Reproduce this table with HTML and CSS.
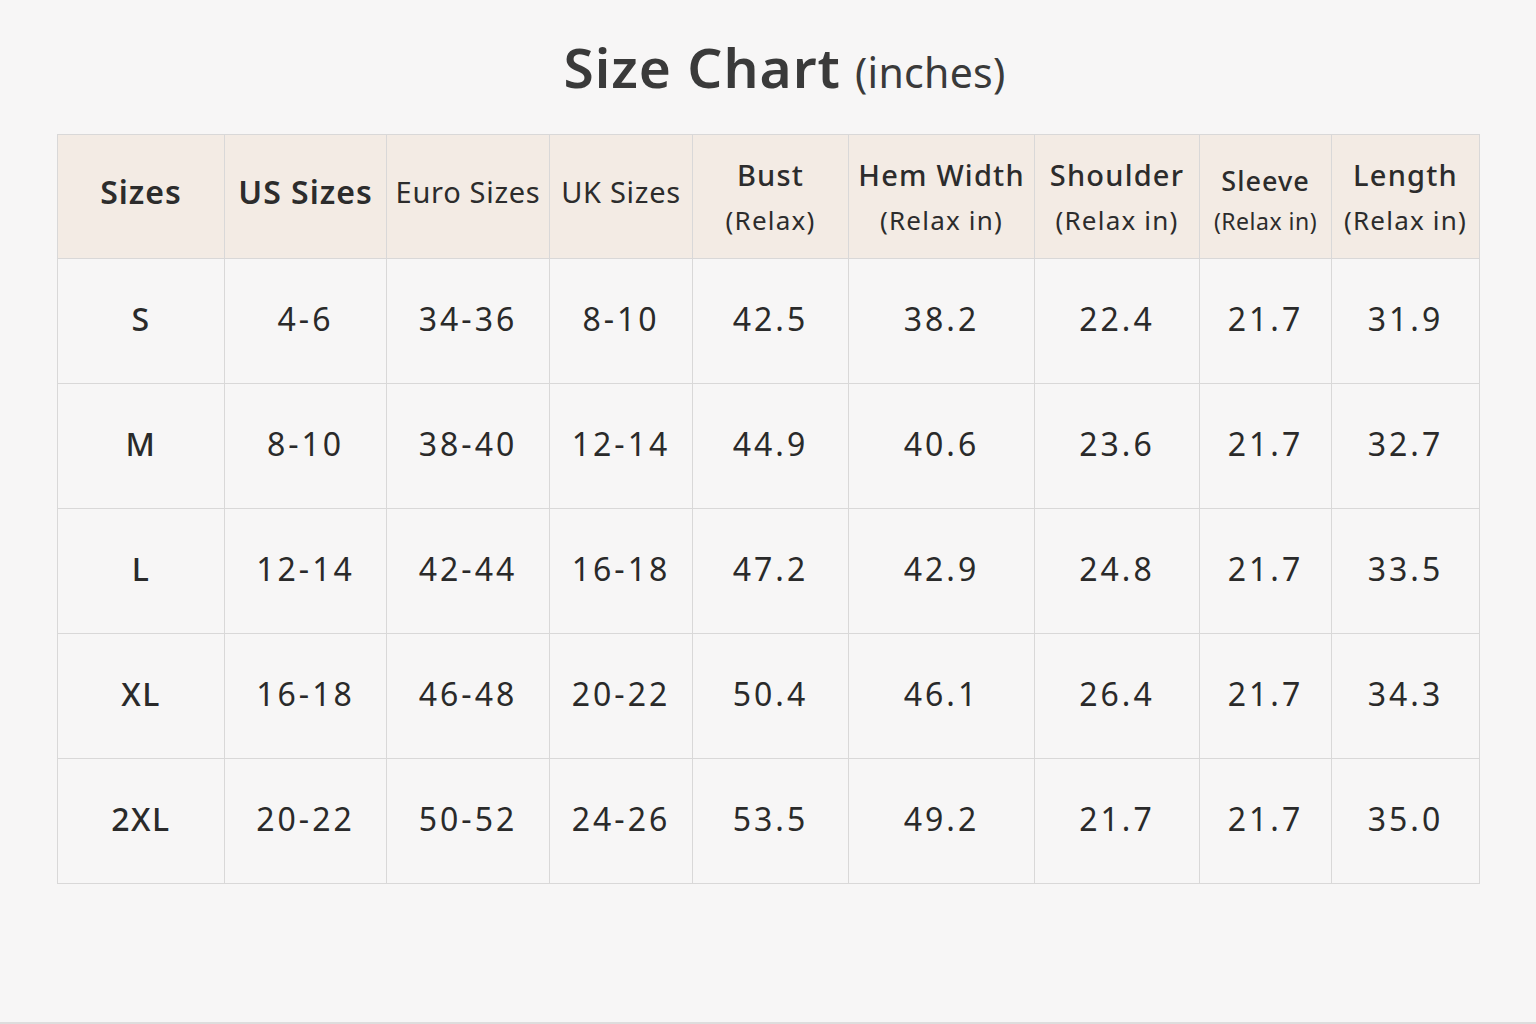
FILE: index.html
```html
<!DOCTYPE html>
<html>
<head>
<meta charset="utf-8">
<link rel="stylesheet" href="styles.css">
</head>
<body>
<div class="page">
  <h1 class="title"><span class="title-main">Size Chart</span> <span class="title-sub">(inches)</span></h1>
  <table class="chart">
    <colgroup>
      <col class="c1"><col class="c2"><col class="c3"><col class="c4"><col class="c5"><col class="c6"><col class="c7"><col class="c8"><col class="c9">
    </colgroup>
    <thead>
      <tr>
        <th class="h-bold">Sizes</th>
        <th class="h-bold">US Sizes</th>
        <th class="h-reg">Euro Sizes</th>
        <th class="h-reg">UK Sizes</th>
        <th class="h-two"><span class="l1">Bust</span><span class="l2">(Relax)</span></th>
        <th class="h-two"><span class="l1">Hem Width</span><span class="l2">(Relax in)</span></th>
        <th class="h-two"><span class="l1">Shoulder</span><span class="l2">(Relax in)</span></th>
        <th class="h-two small"><span class="l1">Sleeve</span><span class="l2">(Relax in)</span></th>
        <th class="h-two"><span class="l1">Length</span><span class="l2">(Relax in)</span></th>
      </tr>
    </thead>
    <tbody>
      <tr><td class="size">S</td><td>4-6</td><td>34-36</td><td>8-10</td><td>42.5</td><td>38.2</td><td>22.4</td><td>21.7</td><td>31.9</td></tr>
      <tr><td class="size">M</td><td>8-10</td><td>38-40</td><td>12-14</td><td>44.9</td><td>40.6</td><td>23.6</td><td>21.7</td><td>32.7</td></tr>
      <tr><td class="size">L</td><td>12-14</td><td>42-44</td><td>16-18</td><td>47.2</td><td>42.9</td><td>24.8</td><td>21.7</td><td>33.5</td></tr>
      <tr><td class="size">XL</td><td>16-18</td><td>46-48</td><td>20-22</td><td>50.4</td><td>46.1</td><td>26.4</td><td>21.7</td><td>34.3</td></tr>
      <tr><td class="size">2XL</td><td>20-22</td><td>50-52</td><td>24-26</td><td>53.5</td><td>49.2</td><td>21.7</td><td>21.7</td><td>35.0</td></tr>
    </tbody>
  </table>
</div>
</body>
</html>
```
FILE: styles.css
```css
html, body {
  margin: 0;
  padding: 0;
}
body {
  background: #f7f6f6;
  font-family: "Noto Sans", "Open Sans", sans-serif;
  color: #2f2f2f;
  width: 1536px;
  height: 1024px;
  overflow: hidden;
  box-sizing: border-box;
  border-bottom: 2px solid #dedddd;
}
.page {
  padding: 0 0 0 57px;
}
.title {
  margin: 0;
  height: 134px;
  box-sizing: border-box;
  width: 1421px;
  padding-left: 34px;
  text-align: center;
  font-size: 54px;
  font-weight: 400;
  line-height: 134px;
  color: #3a3a3a;
  white-space: nowrap;
}
.title-main {
  font-size: 55px;
  font-weight: 600;
  letter-spacing: 1px;
}
.title-sub {
  font-size: 41px;
  font-weight: 400;
  line-height: 1;
  letter-spacing: 0.3px;
}
.chart {
  border-collapse: collapse;
  table-layout: fixed;
  width: 1422px;
}
.c1 { width: 167px; }
.c2 { width: 162px; }
.c3 { width: 163px; }
.c4 { width: 143px; }
.c5 { width: 156px; }
.c6 { width: 186px; }
.c7 { width: 165px; }
.c8 { width: 132px; }
.c9 { width: 148px; }
.chart th, .chart td {
  border: 1px solid #d9d8d8;
  text-align: center;
  vertical-align: middle;
  padding: 0;
  white-space: nowrap;
}
.chart thead th {
  background: #f3ebe4;
  height: 123px;
  color: #2c2c2c;
}
.chart thead th.h-bold,
.chart thead th.h-reg {
  height: 113px;
  padding-bottom: 10px;
}
.h-bold {
  font-size: 32px;
  font-weight: 600;
  letter-spacing: 1px;
}
.h-reg {
  font-size: 29px;
  font-weight: 400;
  letter-spacing: 0.7px;
}
.h-two .l1 {
  display: block;
  font-size: 29px;
  font-weight: 500;
  line-height: 34px;
  padding-bottom: 13px;
  letter-spacing: 1.2px;
}
.h-two .l2 {
  display: block;
  font-size: 26px;
  font-weight: 400;
  line-height: 30px;
  letter-spacing: 1.2px;
}
.h-two.small .l1 {
  font-size: 27px;
  padding-top: 6px;
  padding-bottom: 8px;
  letter-spacing: 1px;
}
.h-two.small .l2 {
  font-size: 23px;
  letter-spacing: 0.5px;
}
.chart tbody td {
  height: 118px;
  padding-bottom: 6px;
  font-size: 32px;
  font-weight: 400;
  letter-spacing: 3px;
  color: #2a2a2a;
}
.chart tbody td.size {
  font-weight: 500;
  font-size: 32px;
  letter-spacing: 1.5px;
}
```
